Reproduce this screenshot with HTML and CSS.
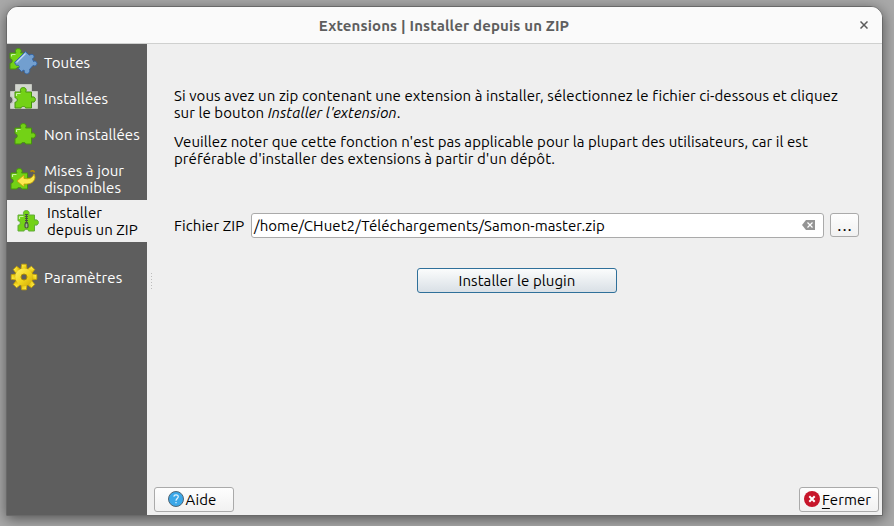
FILE: index.html
```
<!DOCTYPE html>
<html lang="fr">
<head>
<meta charset="utf-8">
<title>Extensions | Installer depuis un ZIP</title>
<link rel="stylesheet" href="styles.css">
</head>
<body>
<svg class="defs" width="0" height="0" aria-hidden="true">
  <defs>
    <symbol id="piece" viewBox="0 0 22 22">
      <path d="M1 5H7C5.500 2.700 6.800 .6 9.300 .6S13 2.700 11.600 5H17.500V10.200C19.500 9.200 21.400 10.300 21.400 12.500S19.500 15.800 17.500 14.800V21H11.500C11.700 20 10.800 19.500 9.400 19.500S7 20 7.200 21H1V15.200C2.500 15.200 3.200 14.300 3.200 12.900S2.500 10.800 1 10.800Z"/>
    </symbol>
    <linearGradient id="gold" x1="0" y1="0" x2="1" y2="1">
      <stop offset="0" stop-color="#fff16a"/><stop offset=".55" stop-color="#f2d51c"/><stop offset="1" stop-color="#d1a908"/>
    </linearGradient>
  </defs>
</svg>
<main class="window">
  <header class="titlebar">
    <h1>Extensions | Installer depuis un ZIP</h1>
    <svg class="close" viewBox="0 0 8 8"><path d="M.5.5 7.5 7.5M7.5.5.5 7.5"/></svg>
  </header>
  <div class="body">
    <nav class="sidebar">
      <a class="item">
        <svg class="icon" viewBox="0 0 30 30"><use class="green" href="#piece" x="0" y="1" width="22" height="22"/><path class="shine" d="M2.500 7.500h4m-4 0v2"/><path class="blue" d="M5.500 15.500 16.500 4.500 19.500 7.500C20.500 9 21.500 7 23 7.300 25.800 8 25.500 11 23.500 11.800L24.500 14.500C26 13.500 28 14.500 28 16.500S26 19.500 24 18.500L20.500 22.500C21.500 25 19 28 16.500 26.500 15 25.500 15.500 24 15 23L12.500 24.500 9.500 21.500C11.500 19.500 9.500 17.500 7.500 18.500Z"/><path class="gloss" d="m7.500 15.500 9-9"/></svg>
        <span>Toutes</span>
      </a>
      <a class="item">
        <svg class="icon" viewBox="0 0 30 30"><path class="tray" d="M1.500 8.500H6.500V1.500H22.500V8.500H28.500V25.500H1.500V20.500Q4 20 4 17T1.500 13.500Z"/><use class="green" href="#piece" x="5" y="4" width="22" height="22"/><path class="shine" d="M7.500 10.500h4m-4 0v2.500"/></svg>
        <span>Installées</span>
      </a>
      <a class="item">
        <svg class="icon" viewBox="0 0 30 30"><use class="green" href="#piece" x="5" y="4" width="22" height="22"/><path class="shine" d="M7.500 10.500h4m-4 0v2.500"/></svg>
        <span>Non installées</span>
      </a>
      <a class="item tall">
        <svg class="icon" viewBox="0 0 30 30"><use class="green" href="#piece" x="1" y="4" width="22" height="22"/><path class="shine" d="M3.500 10.500h4m-4 0v2.500"/><path class="arrow" d="M8 17 15 11V14.500Q23 16 25 10C28 15 24 21 15 20V23Z"/><path class="tail" d="M21.500 7.500q3-2 4 1"/></svg>
        <span>Mises à jour<br>disponibles</span>
      </a>
      <a class="item tall selected">
        <svg class="icon" viewBox="0 0 30 30"><use class="green soft" href="#piece" x="5" y="4" width="22" height="22"/><path class="shine" d="M7.500 10.500h4m-4 0v2.500"/><path class="zip" d="M14.500 8V17"/><path class="zip-core" d="M14.500 8V17"/><rect class="pull" x="13" y="17" width="3" height="5" rx="1.500"/></svg>
        <span>Installer<br>depuis un ZIP</span>
      </a>
      <a class="item settings">
        <svg class="icon" viewBox="0 0 30 30"><g class="gear" transform="translate(15 15)"><path id="tooth" d="M-3-8-2.300-12.800H2.300L3-8Z"/><use href="#tooth" transform="rotate(45)"/><use href="#tooth" transform="rotate(90)"/><use href="#tooth" transform="rotate(135)"/><use href="#tooth" transform="rotate(180)"/><use href="#tooth" transform="rotate(225)"/><use href="#tooth" transform="rotate(270)"/><use href="#tooth" transform="rotate(315)"/><circle r="8.800"/></g><circle class="hub" cx="15" cy="15" r="3"/></svg>
        <span>Paramètres</span>
      </a>
    </nav>
    <div class="splitter"></div>
    <section class="content">
      <div class="intro">
        <p>Si vous avez un zip contenant une extension à installer, sélectionnez le fichier ci-dessous et cliquez<br>sur le bouton <em>Installer l'extension</em>.</p>
        <p>Veuillez noter que cette fonction n'est pas applicable pour la plupart des utilisateurs, car il est<br>préférable d'installer des extensions à partir d'un dépôt.</p>
      </div>
      <div class="file-row">
        <label>Fichier ZIP</label>
        <div class="field">
          <span>/home/CHuet2/Téléchargements/Samon-master.zip</span>
          <svg class="clear" viewBox="0 0 13 10"><path class="tag" d="M0 5 4 0H13V10H4Z"/><path class="cross" d="m5.500 2.500 5 5m0-5-5 5"/></svg>
        </div>
        <div class="button browse">...</div>
      </div>
      <div class="button primary">Installer le plugin</div>
      <footer class="actions">
        <div class="button help">
          <svg viewBox="0 0 16 16"><circle class="help-bg" cx="8" cy="8" r="7.500"/><path class="mark" d="M5.800 5.600Q6 3.900 8 3.900 10.300 3.900 10.300 5.800C10.300 7.300 8 7.700 8 9.700M8 11v1.300"/></svg>
          <span>Aide</span>
        </div>
        <div class="button quit">
          <svg viewBox="0 0 16 16"><circle class="quit-bg" cx="8" cy="8" r="8"/><path class="quit-x" d="m5.300 5.300 5.400 5.400m0-5.400-5.400 5.400"/></svg>
          <span><u>F</u>ermer</span>
        </div>
      </footer>
    </section>
  </div>
</main>
</body>
</html>
```
FILE: styles.css
```
* { box-sizing: border-box; }
body {
  margin: 0;
  padding: 6px 11px 10px 6px;
  width: 894px;
  height: 526px;
  overflow: hidden;
  background: #a9a9a9;
  color: #000;
  font: 15px/17px "Ubuntu", "Noto Sans", sans-serif;
  letter-spacing: .075px;
  font-variant-ligatures: none;
  white-space: nowrap;
}
.defs { position: absolute; }
svg { flex: none; display: block; }
.window {
  height: 510px;
  display: flex;
  flex-direction: column;
  border: 1px solid #696969;
  border-radius: 12px 12px 0 0;
  background: #efefef;
  overflow: hidden;
  box-shadow: 0 3px 14px rgba(0, 0, 0, .5);
}
.titlebar {
  flex: none;
  height: 37px;
  display: grid;
  grid-template-columns: 1fr auto;
  align-items: center;
  padding-right: 14px;
  background: #fafafa;
  border-bottom: 1px solid #cfd0cf;
}
h1 { margin: 2px 0 0 21px; text-align: center; font-size: 15px; line-height: 20px; font-weight: 700; color: #5e5e5e; letter-spacing: .14px; }
.close { width: 8px; height: 8px; fill: none; stroke: #5b5b5b; stroke-width: 1.5; }
.body { flex: 1; display: flex; min-height: 0; }
.sidebar { width: 140px; flex: none; background: #5e5e5e; }
.item { display: flex; align-items: center; height: 36px; padding-left: 2px; gap: 5px; color: #fff; }
.item.tall { height: 42px; }
.item:nth-child(4) { margin-top: 6px; }
.item.selected { background: #efefef; color: #000; padding-left: 5px; }
.item.settings { margin-top: 17px; }
.icon { width: 30px; height: 30px; }
.green { fill: #73d216; stroke: #46940d; }
.soft { stroke: #62ac3b; }
.blue { fill: #729fcf; stroke: #3465a4; }
.shine { fill: none; stroke: #caf5a5; stroke-width: 1.2; }
.gloss { fill: none; stroke: #c3daf2; stroke-width: 1.2; }
.tray { fill: #d3d7cf; stroke: #c2c5be; }
.arrow { fill: #fce94f; stroke: #c4a000; stroke-width: .8; }
.tail { fill: none; stroke: #b98a00; stroke-width: 1.6; }
.zip { stroke: #485342; stroke-width: 3; stroke-dasharray: 1 1; }
.zip-core { stroke: #485342; stroke-width: 1; }
.pull { fill: #a4b79a; stroke: #485342; stroke-width: 1.2; }
.gear { fill: url(#gold); stroke: #c4a000; stroke-width: .8; }
.gear circle { stroke: none; }
.hub { fill: #5e5e5e; stroke: #ab8b05; }
.splitter { flex: none; align-self: flex-start; width: 1px; height: 17px; margin: 229px 0 0 4px; background: repeating-linear-gradient(#bcbcbc 0 1px, transparent 1px 3px); }
.content { flex: 1; display: flex; flex-direction: column; padding: 43px 3px 3px 2px; min-width: 0; }
.intro { padding-left: 20px; }
p { margin: 0 0 12px; }
.file-row { display: flex; align-items: center; margin-top: 34px; padding: 0 20px; gap: 6px; }
label { width: 71px; }
.field { width: 573px; height: 25px; display: flex; align-items: center; justify-content: space-between; padding: 0 8px 0 2px; background: #fff; border: 1px solid #aaa; border-radius: 3px; }
.clear { width: 13px; height: 10px; margin-bottom: 1px; }
.tag { fill: #949494; }
.cross { stroke: #fff; stroke-width: 1.2; }
.button { display: flex; align-items: center; justify-content: center; border: 1px solid #aaa; border-radius: 3px; background: linear-gradient(#fefefe, #f1f1f1); height: 25px; }
.browse { width: 29px; height: 24px; font-size: 17px; letter-spacing: 1px; padding: 0 0 2px 1px; margin-bottom: 1px; }
.primary { width: 200px; height: 25px; margin: 30px 0 0 263px; border-color: #2f709a; background: linear-gradient(#fbfcfc, #d9e0e6); }
.actions { display: flex; justify-content: space-between; margin-top: auto; }
.help, .quit { width: 80px; gap: 2px; padding-right: 4px; }
.quit { padding-right: 3px; }
.help svg, .quit svg { width: 16px; height: 16px; margin-bottom: 1px; }
.help-bg { fill: #3ba7e8; stroke: #526674; }
.mark { fill: none; stroke: #e5f4fd; stroke-width: 1.2; }
.quit-bg { fill: #c7162b; }
.quit-x { stroke: #fff; stroke-width: 2; }
u { text-decoration-thickness: 1px; text-underline-offset: 3px; }
```
